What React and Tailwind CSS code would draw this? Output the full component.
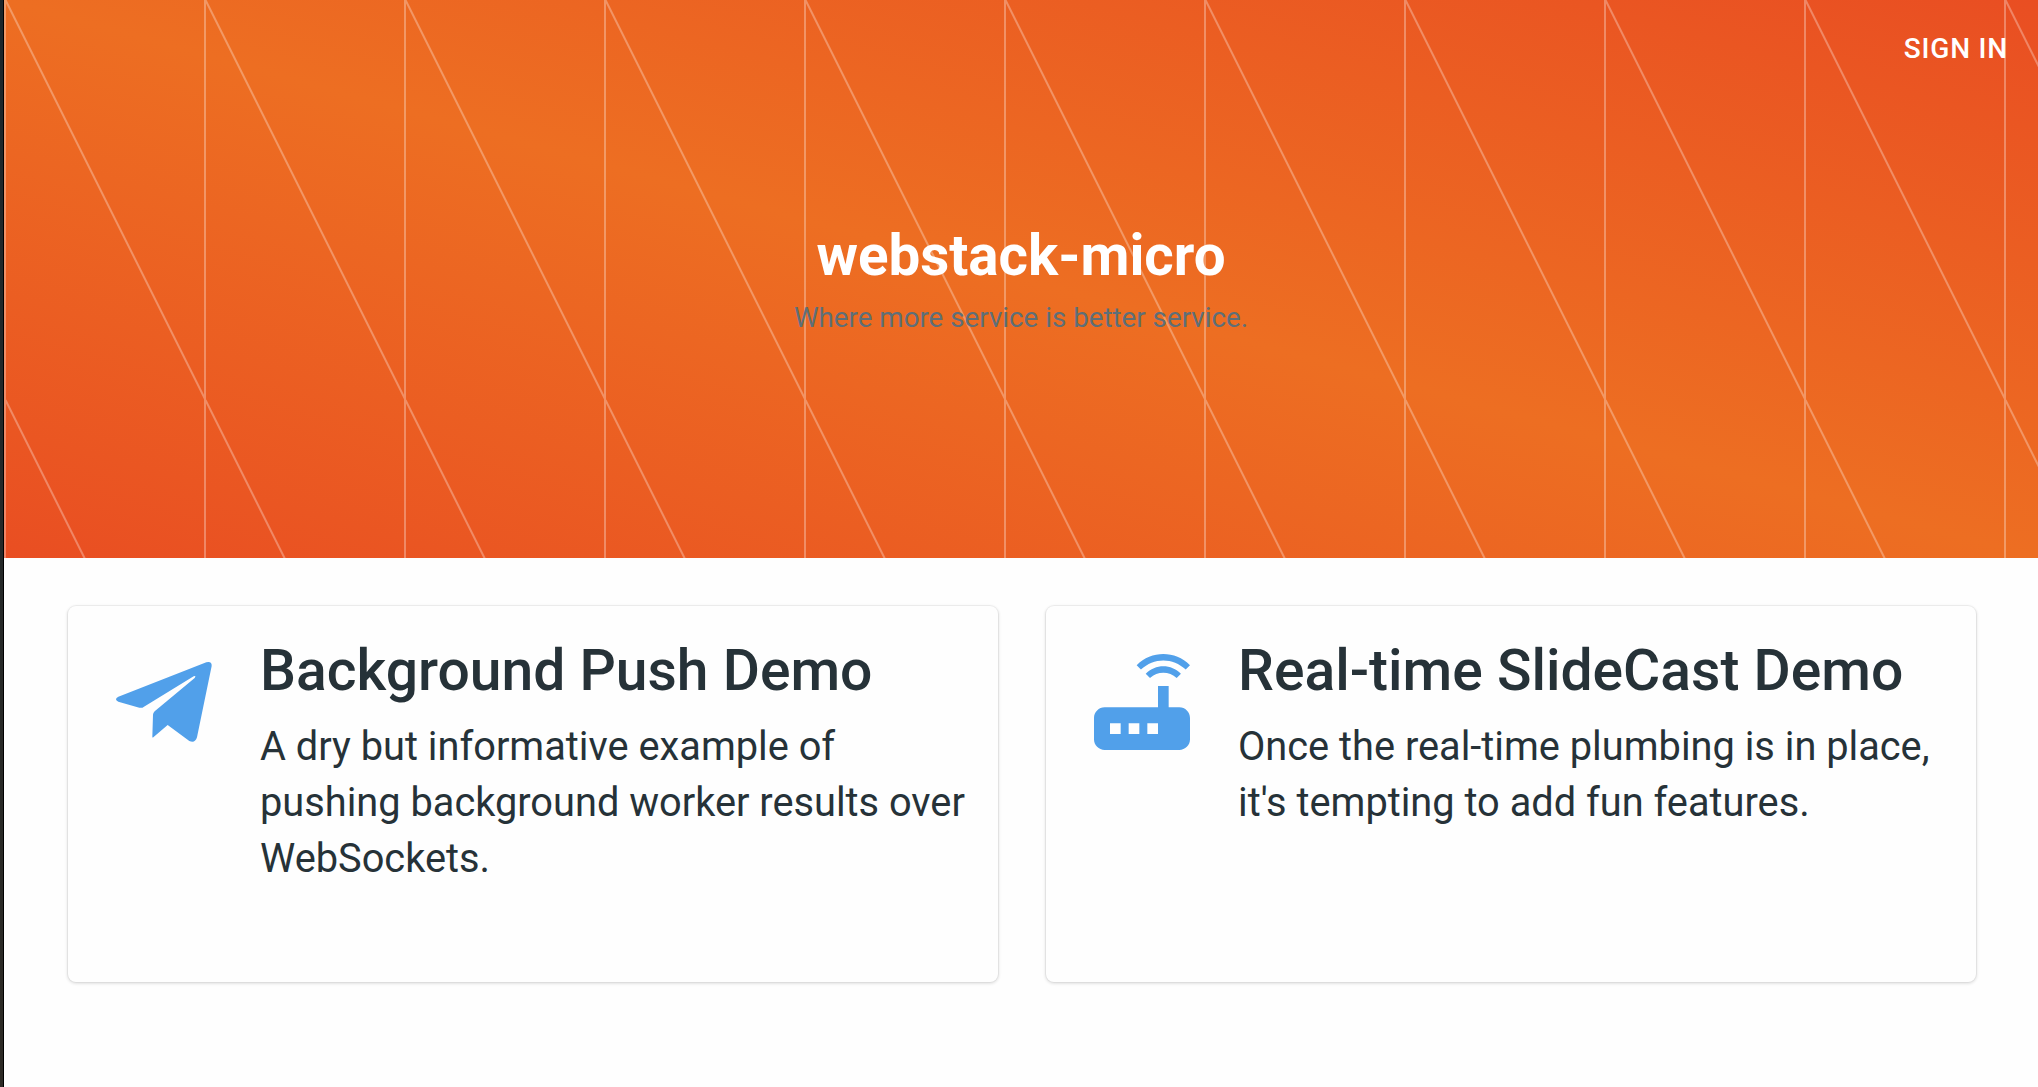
import React from "react";
import { MdRouter } from "react-icons/md";

function HeroPattern() {
  return (
    <svg className="pointer-events-none absolute inset-0 h-full w-full" aria-hidden="true">
      <defs>
        <pattern id="hero-lines" width="200" height="400" patternUnits="userSpaceOnUse">
          <path
            d="M1 0V400M-99 -201L1.5 0L201.5 400L301.5 600M-198.5 0L1.5 400"
            fill="none"
            stroke="#fff"
            strokeOpacity="0.3"
            strokeWidth="2"
          />
        </pattern>
      </defs>
      <rect width="100%" height="100%" fill="url(#hero-lines)" />
    </svg>
  );
}

function PaperPlane({ className }) {
  return (
    <svg viewBox="-24 -36 384 384" fill="currentColor" className={className} aria-hidden="true">
      <path d="M31 140L295 37Q312 33 311 48L267 262Q261 281 244 273L179 225L136 262Q133 264 133 260L135 194Q135 189 140 184L260 84Q266 76 257 79L108 170Q102 175 94 173L31 155Q17 148 31 140Z" />
    </svg>
  );
}

function DemoCard({ icon: Icon, title, children }) {
  return (
    <article className="flex h-[376px] flex-1 basis-0 gap-8 rounded-lg bg-[#fefefe] p-8 shadow-[0_0_0_1px_rgba(0,0,0,0.04),0_1px_3px_1px_rgba(0,0,0,0.11)]">
      <Icon className="size-32 shrink-0 text-[#51a0ea]" />
      <div className="min-w-0 flex-1 pt-px">
        <h2 className="mb-4 text-[57px] leading-[64px] font-medium whitespace-nowrap">{title}</h2>
        <p className="text-[39.75px] leading-[56px]">{children}</p>
      </div>
    </article>
  );
}

export default function App() {
  return (
    <div className="flex h-[1087px] bg-[#fefefe] font-['Roboto',sans-serif] text-[#263238]">
      <div className="w-1 shrink-0 border-r border-black bg-linear-to-b from-[#1c272b] to-[#2d2a25]" />
      <div className="min-w-0 flex-1">
        <header className="relative h-[558px] bg-linear-to-tr from-[#e94e22] via-[#ed6e22] to-[#e94e22]">
          <HeroPattern />
          <div className="relative flex h-full flex-col">
            <nav className="flex h-56 justify-end pt-[29px] pr-[30px]">
              <a className="text-[28px] leading-10 font-medium tracking-[0.8px] text-white">SIGN IN</a>
            </nav>
            <div className="text-center">
              <h1 className="text-[56.5px] leading-[64px] font-bold text-white">webstack-micro</h1>
              <p className="mt-[10px] text-[27.75px] leading-10 text-[#5e6f78]">
                Where more service is better service.
              </p>
            </div>
          </div>
        </header>
        <main className="flex gap-12 pt-12 pr-[62px] pl-16">
          <DemoCard icon={PaperPlane} title="Background Push Demo">
            A dry but informative example of pushing background worker results over WebSockets.
          </DemoCard>
          <DemoCard icon={MdRouter} title="Real-time SlideCast Demo">
            Once the real-time plumbing is in place, it's tempting to add fun features.
          </DemoCard>
        </main>
      </div>
    </div>
  );
}
